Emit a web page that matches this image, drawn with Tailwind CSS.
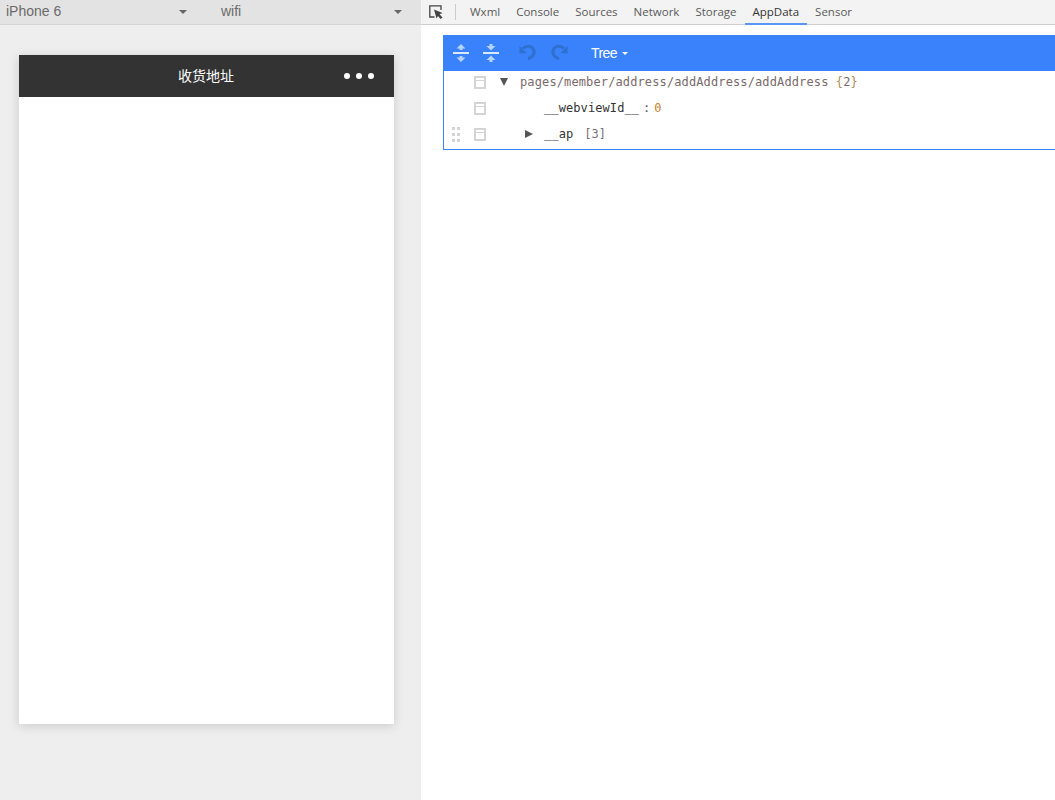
<!DOCTYPE html>
<html>
<head>
<meta charset="utf-8">
<script src="https://cdn.jsdelivr.net/npm/@tailwindcss/browser@4"></script>
</head>
<body class="m-0 overflow-hidden bg-white">
<div class="flex h-[800px] w-[1055px] overflow-hidden">
  <!-- Simulator -->
  <div class="flex w-[421px] shrink-0 flex-col bg-[#eeeeee]">
    <div class="flex h-[25px] items-center border-b border-[#d4d4d4] bg-[#e3e3e3] pb-[2px] font-['Liberation_Sans',sans-serif] text-[14px] text-[#6b6b6b]">
      <div class="flex w-[215px] items-center justify-between pl-[6px] pr-[28px]">
        <span>iPhone 6</span>
        <span class="mt-[2px] h-0 w-0 border-x-[4px] border-t-[4px] border-x-transparent border-t-[#666]"></span>
      </div>
      <div class="flex w-[187px] items-center justify-between pl-[6px]">
        <span>wifi</span>
        <span class="mt-[2px] h-0 w-0 border-x-[4px] border-t-[4px] border-x-transparent border-t-[#666]"></span>
      </div>
    </div>
    <div class="pl-[19px] pt-[30px]">
      <div class="h-[669px] w-[375px] bg-white shadow-[0_2px_10px_rgba(0,0,0,0.15)]">
        <div class="relative flex h-[42px] items-center justify-center bg-[#333333] pb-[2px] font-['Noto_Sans_CJK_SC',sans-serif] text-[14px] font-normal text-white">
          <span class="-ml-px leading-none">收货地址</span>
          <div class="absolute right-[20px] top-[18px] flex gap-[6px]">
            <span class="h-[6px] w-[6px] rounded-full bg-white"></span>
            <span class="h-[6px] w-[6px] rounded-full bg-white"></span>
            <span class="h-[6px] w-[6px] rounded-full bg-white"></span>
          </div>
        </div>
      </div>
    </div>
  </div>
  <!-- Devtools -->
  <div class="flex min-w-0 flex-1 flex-col bg-white">
    <div class="flex h-[25px] items-center border-b border-[#cfcfcf] bg-[#f3f3f3] font-['Open_Sans',sans-serif] text-[11.5px] text-[#5a5a5a]">
      <svg class="ml-[8px] h-[15px] w-[15px]" viewBox="0 0 15 15" fill="none">
        <path d="M5.5 12H0.8V0.8H12V5" stroke="#444" stroke-width="1.3"/>
        <path d="M5 4.5L13.5 8L10.5 9.3L13.5 12.5L11.5 14L9 11L7.5 13.5Z" fill="#444"/>
      </svg>
      <span class="ml-[11px] mr-[6px] h-[16px] w-px bg-[#cccccc]"></span>
      <div class="flex h-[25px] items-center">
        <span class="flex h-[25px] items-center px-[8px]">Wxml</span>
        <span class="flex h-[25px] items-center px-[8px]">Console</span>
        <span class="flex h-[25px] items-center px-[8px]">Sources</span>
        <span class="flex h-[25px] items-center px-[8px]">Network</span>
        <span class="flex h-[25px] items-center px-[8px]">Storage</span>
        <span class="flex h-[25px] items-center border-b-2 border-[#5a96f5] px-[8px] pt-[1px] text-[#333]">AppData</span>
        <span class="flex h-[25px] items-center px-[8px]">Sensor</span>
      </div>
    </div>
    <div class="pl-[22px] pt-[10px]">
      <div class="h-[115px] w-[640px] border border-t-0 border-[#3a82f7]">
        <div class="-ml-px flex h-[36px] items-center bg-[#3982fb] font-['Liberation_Sans',sans-serif] text-[14px] text-white">
          <svg class="ml-[10px] h-[20px] w-[16px]" viewBox="0 0 16 20">
            <path d="M8 1L12.5 5.5H9.5V7H6.5V5.5H3.5Z" fill="#b4d3ff"/>
            <rect x="0" y="9" width="16" height="2" fill="#d8e8ff"/>
            <path d="M6.5 13H9.5V14.5H12.5L8 19L3.5 14.5H6.5Z" fill="#b4d3ff"/>
          </svg>
          <svg class="ml-[14px] h-[20px] w-[16px]" viewBox="0 0 16 20">
            <path d="M6.5 1H9.5V3H12.5L8 7.5L3.5 3H6.5Z" fill="#b4d3ff"/>
            <rect x="0" y="9" width="16" height="2" fill="#d8e8ff"/>
            <path d="M8 12.5L12.5 17H9.5V19H6.5V17H3.5Z" fill="#b4d3ff"/>
          </svg>
          <svg class="ml-[20px] h-[20px] w-[18px]" viewBox="0 0 18 20" fill="none">
            <path d="M4 5.5C6 3 11 2.5 13.5 5C16.5 8 15.5 14 9 15.5" stroke="#2f6fd0" stroke-width="3"/>
            <path d="M0.5 3L7.5 10L0.5 10.5Z" fill="#2f6fd0"/>
          </svg>
          <svg class="ml-[13px] h-[20px] w-[18px]" viewBox="0 0 18 20" fill="none">
            <path d="M14 5.5C12 3 7 2.5 4.5 5C1.5 8 2.5 14 9 15.5" stroke="#2f6fd0" stroke-width="3"/>
            <path d="M17.5 3L10.5 10L17.5 10.5Z" fill="#2f6fd0"/>
          </svg>
          <span class="ml-[23px] tracking-[-0.6px]">Tree</span>
          <span class="ml-[5px] h-0 w-0 border-x-[3px] border-t-[3px] border-x-transparent border-t-white"></span>
        </div>
        <div class="font-['DejaVu_Sans_Mono',monospace] text-[12px] leading-[26px] text-[#333]">
          <div class="flex h-[22px] items-center">
            <span class="ml-[30px] box-border h-[13px] w-[12px] border-2 border-[#d4d4d4]"><span class="mt-[2px] block h-px bg-[#d4d4d4]"></span></span>
            <span class="ml-[14px] h-0 w-0 border-x-[4.5px] border-t-[8px] border-x-transparent border-t-[#555]"></span>
            <span class="ml-[12px] tracking-[0.12px] text-[#7a6a6a]">pages/member/address/addAddress/addAddress <span class="text-[#b08a5a]">{</span><span class="text-[#7a6a6a]">2</span><span class="text-[#b08a5a]">}</span></span>
          </div>
          <div class="flex h-[30px] items-center">
            <span class="ml-[30px] box-border h-[13px] w-[12px] border-2 border-[#d4d4d4]"><span class="mt-[2px] block h-px bg-[#d4d4d4]"></span></span>
            <span class="ml-[58px] tracking-[0.09px] text-[#333]">__webviewId__</span>
            <span class="ml-[4px] text-[#555]">:</span>
            <span class="ml-[4px] text-[#c97f2e]">0</span>
          </div>
          <div class="flex h-[22px] items-center">
            <span class="ml-[8px] grid w-[8px] grid-cols-[3px_3px] gap-x-[2px] gap-y-[3px]">
              <i class="h-[3px] w-[3px] bg-[#d4d4d4]"></i><i class="h-[3px] w-[3px] bg-[#d4d4d4]"></i>
              <i class="h-[3px] w-[3px] bg-[#d4d4d4]"></i><i class="h-[3px] w-[3px] bg-[#d4d4d4]"></i>
              <i class="h-[3px] w-[3px] bg-[#d4d4d4]"></i><i class="h-[3px] w-[3px] bg-[#d4d4d4]"></i>
            </span>
            <span class="ml-[14px] box-border h-[13px] w-[12px] border-2 border-[#d4d4d4]"><span class="mt-[2px] block h-px bg-[#d4d4d4]"></span></span>
            <span class="ml-[39px] h-0 w-0 border-y-[4.5px] border-l-[8px] border-y-transparent border-l-[#555]"></span>
            <span class="ml-[11px] tracking-[0.09px] text-[#333]">__ap</span>
            <span class="ml-[11px] text-[#7a7078]">[3]</span>
          </div>
        </div>
      </div>
    </div>
  </div>
</div>
</body>
</html>
